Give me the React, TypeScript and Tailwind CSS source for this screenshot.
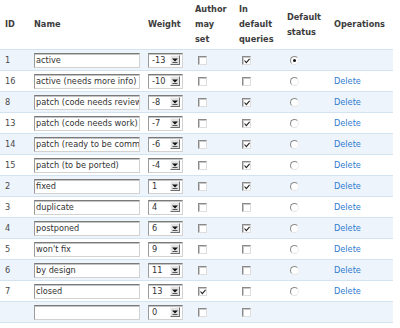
import React from "react";

type Row = {
  id: string;
  name: string;
  weight: string;
  author: boolean;
  def: boolean;
  radio: "none" | "on" | "off";
  del: boolean;
};

const rows: Row[] = [
  { id: "1", name: "active", weight: "-13", author: false, def: true, radio: "on", del: false },
  { id: "16", name: "active (needs more info)", weight: "-10", author: false, def: false, radio: "off", del: true },
  { id: "8", name: "patch (code needs review)", weight: "-8", author: false, def: true, radio: "off", del: true },
  { id: "13", name: "patch (code needs work)", weight: "-7", author: false, def: true, radio: "off", del: true },
  { id: "14", name: "patch (ready to be committed)", weight: "-6", author: false, def: true, radio: "off", del: true },
  { id: "15", name: "patch (to be ported)", weight: "-4", author: false, def: true, radio: "off", del: true },
  { id: "2", name: "fixed", weight: "1", author: false, def: true, radio: "off", del: true },
  { id: "3", name: "duplicate", weight: "4", author: false, def: false, radio: "off", del: true },
  { id: "4", name: "postponed", weight: "6", author: false, def: true, radio: "off", del: true },
  { id: "5", name: "won't fix", weight: "9", author: false, def: false, radio: "off", del: true },
  { id: "6", name: "by design", weight: "11", author: false, def: false, radio: "off", del: true },
  { id: "7", name: "closed", weight: "13", author: true, def: false, radio: "off", del: true },
  { id: "", name: "", weight: "0", author: false, def: false, radio: "none", del: false },
];

const cols = "grid grid-cols-[29px_114px_47px_44px_48px_47px_64px]";

function TextBox({ value }: { value: string }) {
  return (
    <div className="h-[15px] w-[106px] overflow-hidden whitespace-nowrap border border-t-[#7a7a7a] border-l-[#9a9a9a] border-r-[#d2d2d2] border-b-[#d2d2d2] bg-white pl-[1px] leading-[13px] text-[#333] shadow-[inset_0_1px_0_#c4c4c4]">
      {value}
    </div>
  );
}

function SelectBox({ value }: { value: string }) {
  return (
    <div className="flex h-[15px] w-[35px] items-center border border-t-[#7a7a7a] border-l-[#9a9a9a] border-r-[#d2d2d2] border-b-[#d2d2d2] bg-white shadow-[inset_0_1px_0_#c4c4c4]">
      <span className="min-w-0 flex-1 whitespace-nowrap pl-[3px] leading-[13px] text-[#333]">{value}</span>
      <div className="mr-[2px] flex h-[10px] w-[10px] shrink-0 items-center justify-center border border-t-[#f6f6f6] border-l-[#f6f6f6] border-r-[#6e6e6e] border-b-[#6e6e6e] bg-[#e2e2e2]">
        <svg width="6" height="5" viewBox="0 0 6 5">
          <path d="M0 0.5h6L3 3.5z" fill="#111" />
          <rect x="0.5" y="4" width="5" height="1" fill="#555" />
        </svg>
      </div>
    </div>
  );
}

function Check({ checked }: { checked: boolean }) {
  return (
    <div className="relative h-[9px] w-[9px] border border-t-[#8a8a8a] border-l-[#8a8a8a] border-r-[#dedede] border-b-[#dedede] bg-white shadow-[inset_1px_1px_0_#c8c8c8]">
      {checked && (
        <svg className="absolute left-[1px] top-[1px]" width="6" height="6" viewBox="0 0 6 6">
          <path d="M0.5 2.5L2.3 4.6L5.6 0.8" stroke="#222" strokeWidth="1.1" fill="none" />
        </svg>
      )}
    </div>
  );
}

function Radio({ on }: { on: boolean }) {
  return (
    <div className="relative flex h-[9px] w-[9px] items-center justify-center rounded-full border border-t-[#8a8a8a] border-l-[#8a8a8a] border-r-[#ececec] border-b-[#e4e4e4] bg-white">
      {on && <div className="h-[3px] w-[3px] rounded-full bg-[#111]" />}
    </div>
  );
}

export default function App() {
  return (
    <div className="h-[328px] w-[400px] bg-white font-['DejaVu_Sans',Verdana,sans-serif] text-[8.2px] text-[#494949]">
      <div className="w-[393px]">
        <div className={`${cols} h-[49px] items-center font-bold leading-[15px] text-[#3c3c3c]`}>
          <div className="pl-[5px]">ID</div>
          <div className="pl-[5px]">Name</div>
          <div className="pl-[5px]">Weight</div>
          <div className="pl-[5px]">
            Author
            <br />
            may
            <br />
            set
          </div>
          <div className="pl-[5px]">
            In
            <br />
            default
            <br />
            queries
          </div>
          <div className="pl-[5px]">
            Default
            <br />
            status
          </div>
          <div className="pl-[5px]">Operations</div>
        </div>
        <div className="border-t border-[#d3e3f1]">
          {rows.map((r, i) => (
            <div
              key={i}
              className={`${cols} h-[21px] items-center border-b border-[#d3e3f1] ${i % 2 === 0 ? "bg-[#edf4fb]" : "bg-white"}`}
            >
              <div className="pl-[5px]">{r.id}</div>
              <div className="pl-[5px]">
                <TextBox value={r.name} />
              </div>
              <div className="pl-[5px]">
                <SelectBox value={r.weight} />
              </div>
              <div className="pl-[8px]">
                <Check checked={r.author} />
              </div>
              <div className="pl-[8px]">
                <Check checked={r.def} />
              </div>
              <div className="pl-[8px]">{r.radio !== "none" && <Radio on={r.radio === "on"} />}</div>
              <div className="pl-[5px]">
                {r.del && <a className="text-[#2f7bcf]">Delete</a>}
              </div>
            </div>
          ))}
        </div>
      </div>
    </div>
  );
}
